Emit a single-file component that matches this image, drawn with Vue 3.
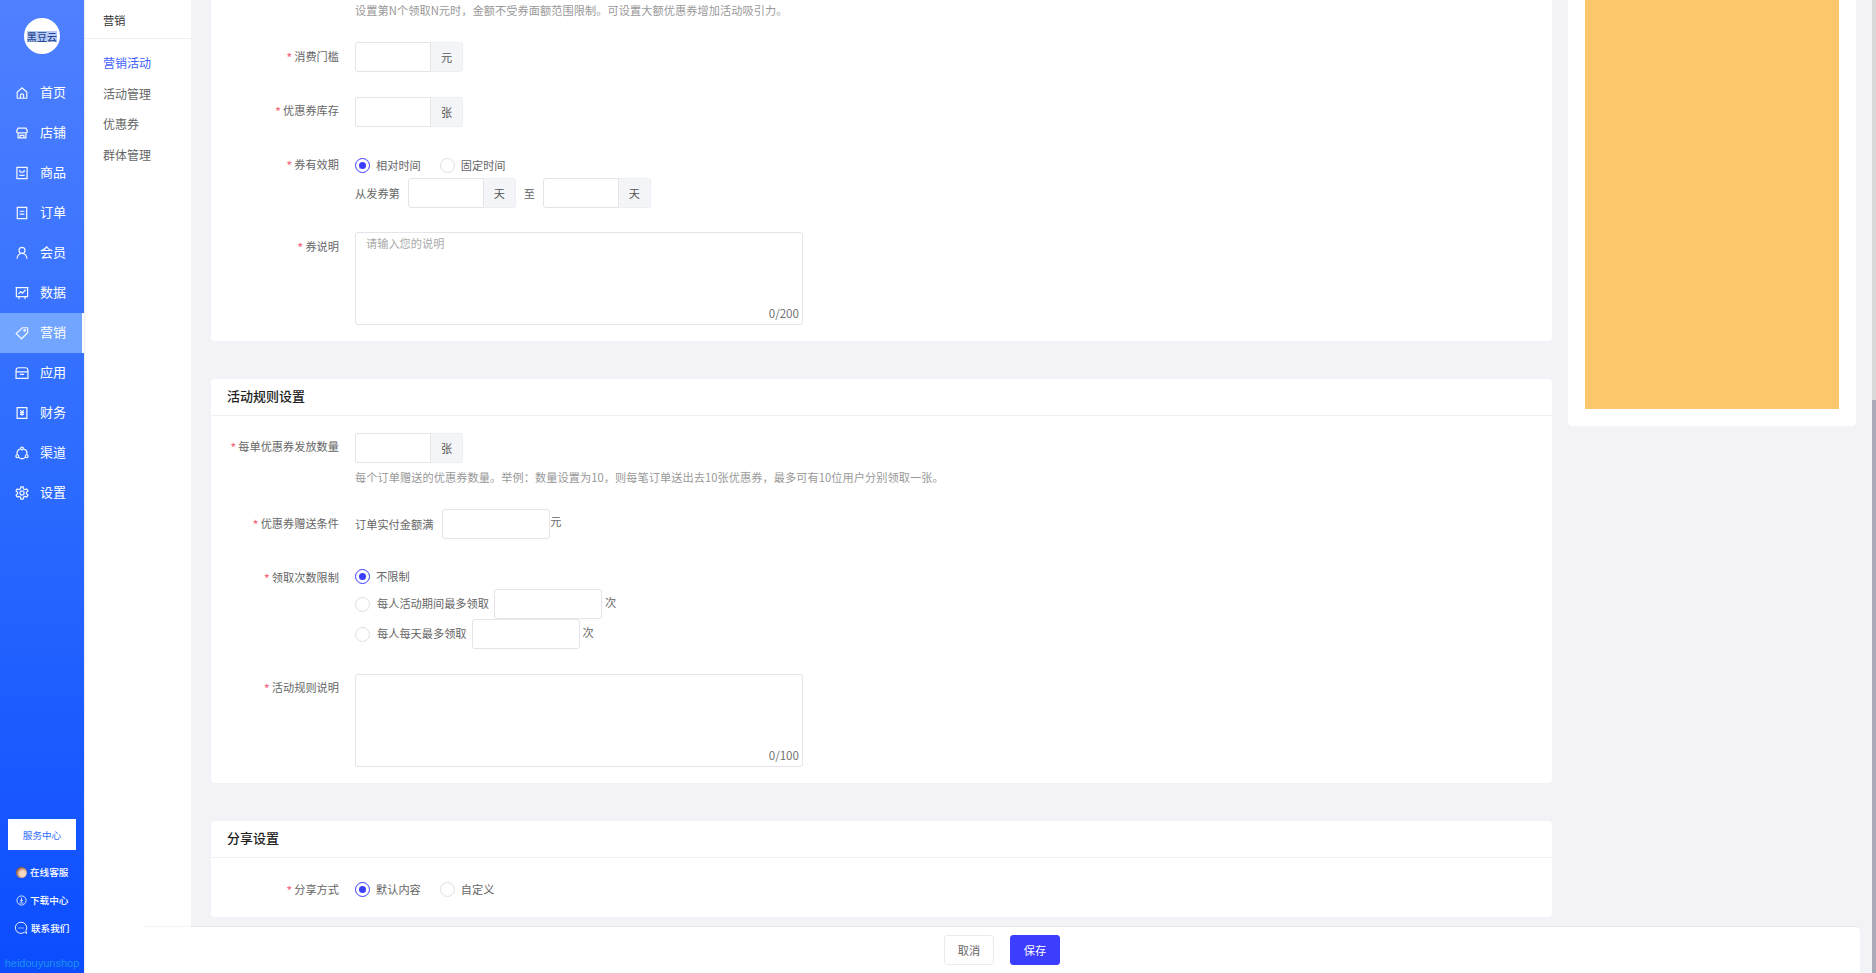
<template>
  <div class="page">
    <aside class="sidebar">
      <div class="logo"><span>黑豆云</span></div>
      <nav class="nav">
        <a v-for="item in navItems" :key="item.name" class="nav-item" :class="{ active: item.active }">
          <svg class="nav-icon" viewBox="0 0 16 16"><path :d="item.icon" /></svg>
          <span class="nav-text">{{ item.name }}</span>
        </a>
      </nav>
      <div class="side-bottom">
        <button class="service-btn">服务中心</button>
        <a class="side-link">
          <span class="avatar"></span>
          在线客服
        </a>
        <a class="side-link">
          <svg class="link-icon small" viewBox="0 0 12 12">
            <circle cx="6" cy="6" r="5" />
            <path d="M6 3v4M4.4 5.6 6 7.2l1.6-1.6M3.8 8.7h4.4" />
          </svg>
          下载中心
        </a>
        <a class="side-link contact">
          <svg class="link-icon" viewBox="0 0 14 14">
            <path d="M7 1.2a5.6 5.6 0 1 0 3.4 10l2.4 1.2-.9-2.6A5.6 5.6 0 0 0 7 1.2z" />
            <path d="M4.4 7h5.2" stroke-dasharray="1.2 .8" />
          </svg>
          联系我们
        </a>
        <div class="brand">heidouyunshop</div>
      </div>
    </aside>

    <aside class="subnav">
      <div class="subnav-title">营销</div>
      <ul class="subnav-list">
        <li class="on">营销活动</li>
        <li>活动管理</li>
        <li>优惠券</li>
        <li>群体管理</li>
      </ul>
    </aside>

    <main class="main">
      <div class="cards">
        <section class="card first">
          <div class="card-body">
            <p class="help top-help">设置第N个领取N元时，金额不受券面额范围限制。可设置大额优惠券增加活动吸引力。</p>
            <div class="form-row tight">
              <label class="label">消费门槛</label>
              <div class="group">
                <input class="input" />
                <span class="addon">元</span>
              </div>
            </div>
            <div class="form-row loose">
              <label class="label short">优惠券库存</label>
              <div class="group">
                <input class="input" />
                <span class="addon">张</span>
              </div>
            </div>
            <div class="form-row">
              <label class="label short">券有效期</label>
              <div class="control">
                <div class="radio-line validity">
                  <span class="radio checked"></span><span class="radio-text">相对时间</span>
                  <span class="radio second"></span><span class="radio-text">固定时间</span>
                </div>
                <div class="days-line">
                  <span class="plain">从发券第</span>
                  <div class="group">
                    <input class="input" />
                    <span class="addon">天</span>
                  </div>
                  <span class="plain to">至</span>
                  <div class="group">
                    <input class="input" />
                    <span class="addon">天</span>
                  </div>
                </div>
              </div>
            </div>
            <div class="form-row">
              <label class="label">券说明</label>
              <div class="textarea">
                <span class="placeholder">请输入您的说明</span>
                <span class="count">0/200</span>
              </div>
            </div>
          </div>
        </section>

        <section class="card">
          <h3 class="card-title">活动规则设置</h3>
          <div class="card-body with-title">
            <div class="form-row">
              <label class="label short">每单优惠券发放数量</label>
              <div class="control">
                <div class="group">
                  <input class="input" />
                  <span class="addon">张</span>
                </div>
                <p class="help rule-help">每个订单赠送的优惠券数量。举例：数量设置为10，则每笔订单送出去10张优惠券，最多可有10位用户分别领取一张。</p>
              </div>
            </div>
            <div class="form-row">
              <label class="label">优惠券赠送条件</label>
              <div class="inline-line">
                <span class="plain">订单实付金额满</span>
                <input class="input wide" />
                <span class="plain unit">元</span>
              </div>
            </div>
            <div class="form-row">
              <label class="label">领取次数限制</label>
              <div class="control">
                <div class="radio-line limit">
                  <span class="radio checked"></span><span class="radio-text">不限制</span>
                </div>
                <div class="inline-line">
                  <span class="radio"></span><span class="radio-text limit-text">每人活动期间最多领取</span>
                  <input class="input wide" />
                  <span class="plain unit times">次</span>
                </div>
                <div class="inline-line">
                  <span class="radio"></span><span class="radio-text limit-text">每人每天最多领取</span>
                  <input class="input wide" />
                  <span class="plain unit times">次</span>
                </div>
              </div>
            </div>
            <div class="form-row loose">
              <label class="label rule-label">活动规则说明</label>
              <div class="textarea">
                <span class="count">0/100</span>
              </div>
            </div>
          </div>
        </section>

        <section class="card">
          <h3 class="card-title">分享设置</h3>
          <div class="card-body share">
            <div class="form-row">
              <label class="label center">分享方式</label>
              <div class="radio-line share-line">
                <span class="radio checked"></span><span class="radio-text">默认内容</span>
                <span class="radio second"></span><span class="radio-text">自定义</span>
              </div>
            </div>
          </div>
        </section>
      </div>

      <aside class="preview">
        <div class="preview-image"></div>
      </aside>

      <div class="scrollbar"><div class="thumb"></div></div>
    </main>

    <footer class="footer">
      <button class="btn">取消</button>
      <button class="btn primary">保存</button>
    </footer>
  </div>
</template>

<script setup>
const navItems = [
  { name: "首页", icon: "M2.5 7 8 2.2 13.5 7v6.3a.7.7 0 0 1-.7.7H3.2a.7.7 0 0 1-.7-.7zM6.2 14v-3.2a1.8 1.8 0 0 1 3.6 0V14" },
  { name: "店铺", icon: "M3.5 2.5h9l1.7 3.5c0 1.2-1 1.8-2 1.8H3.8c-1 0-2-.6-2-1.8zM3.5 7.8v5.7h9V7.8M5.8 14v-3.4h4.4V14" },
  { name: "商品", icon: "M2.2 1.6h11.6v12.8H2.2zM5.5 4.5v1.6c0 .6.4 1 1 1h3c.6 0 1-.4 1-1V4.5M5 10.8h6" },
  { name: "订单", icon: "M2.6 1.6h10.8v12.8H2.6zM5.3 6h5.4M5.3 9.2h5.4" },
  { name: "会员", icon: "M8 1.6a3.4 3.4 0 1 0 0 6.8 3.4 3.4 0 0 0 0-6.8zM2.4 14.6c0-3.4 2.4-6.2 5.6-6.2s5.6 2.8 5.6 6.2" },
  { name: "数据", icon: "M1.6 2v10.2h12.8V2M.6 1.8h14.8M4 9.2l2.5-2.7 2 1.6 3.6-3.8M5 12.2 4.2 15M11 12.2l.8 2.8" },
  { name: "营销", active: true, icon: "M14.4 2v5.6L7.5 14.6 1.4 8.5 8.4 2h6zM11 4.2a.9.9 0 1 0 0 1.8.9.9 0 0 0 0-1.8z" },
  { name: "应用", icon: "M1.2 5.2C1.2 3.4 2.4 2 4 2h8c1.6 0 2.8 1.4 2.8 3.2V14.2H1.2zM1.2 6.8h13.6M5.6 9.6h4.8" },
  { name: "财务", icon: "M2.4 1.8h11.2v12.4H2.4zM6 4.8 8 7.2l2-2.4M5.6 7.6h4.8M5.6 9.6h4.8M8 7.2v4" },
  { name: "渠道", icon: "M5.6 3.4a5.5 5.5 0 0 0-3 6.4M10.4 3.4a5.5 5.5 0 0 1 3 6.4M4.4 13a5.5 5.5 0 0 0 7.2 0M8 1.2a1.6 1.6 0 1 0 0 3.2 1.6 1.6 0 0 0 0-3.2zM2.6 10a1.6 1.6 0 1 0 0 3.2 1.6 1.6 0 0 0 0-3.2zM13.4 10a1.6 1.6 0 1 0 0 3.2 1.6 1.6 0 0 0 0-3.2z" },
  { name: "设置", icon: "M6.7 1h2.6l.4 2.2 1.7 1 2.1-.8 1.3 2.3-1.7 1.5v1.6l1.7 1.5-1.3 2.3-2.1-.8-1.7 1-.4 2.2H6.7l-.4-2.2-1.7-1-2.1.8-1.3-2.3 1.7-1.5V7.2L1.2 5.7l1.3-2.3 2.1.8 1.7-1zM8 5.6a2.4 2.4 0 1 0 0 4.8 2.4 2.4 0 0 0 0-4.8z" },
];
</script>

<style>
html,
body {
  margin: 0;
  overflow: hidden;
}
</style>

<style scoped>
.page {
  display: flex;
  position: relative;
  height: 973px;
  overflow: hidden;
  background: #f2f2f7;
  font-family: "Noto Sans CJK SC", "Noto Sans", sans-serif;
  font-size: 11.2px;
  color: #666;
}

.sidebar {
  display: flex;
  flex-direction: column;
  flex: none;
  width: 84px;
  background: linear-gradient(180deg, #4f80ff 0%, #2f6dff 45%, #0b4dff 100%);
  color: #fff;
}

.logo {
  display: flex;
  align-items: center;
  justify-content: center;
  width: 36px;
  height: 36px;
  margin: 18px auto 19px;
  border-radius: 50%;
  background: #fff;
  font-size: 10px;
  font-weight: 500;
  letter-spacing: 0.2px;
  color: #24468f;
}

.logo span {
  background: #b5caf6;
  line-height: 11px;
}

.nav-item {
  display: flex;
  align-items: center;
  height: 40px;
  padding-left: 15px;
  font-size: 13px;
  color: #fff;
}

.nav-item.active {
  background: #72a5ff;
  border-right: 2px solid #fff;
}

.nav-icon {
  flex: none;
  width: 14px;
  height: 14px;
  margin-right: 11px;
  fill: none;
  stroke: #f2f6ff;
  stroke-width: 1.4;
}

.nav-text {
  margin-top: -3px;
}

.side-bottom {
  margin-top: auto;
  padding-bottom: 2px;
}

.service-btn {
  display: block;
  width: 68px;
  height: 31px;
  margin: 0 8px 8px;
  padding: 0;
  border: 0;
  background: #fff;
  font: inherit;
  font-size: 9.6px;
  color: #2f6dff;
}

.side-link {
  display: flex;
  align-items: center;
  height: 28px;
  padding-left: 16px;
  font-size: 9.6px;
  font-weight: 500;
  color: #fff;
}

.side-link.contact {
  padding-left: 14px;
}

.avatar {
  flex: none;
  width: 11px;
  height: 11px;
  margin-right: 3px;
  border-radius: 50%;
  background: radial-gradient(circle at 60% 60%, #f6d9c2 30%, #8a4a2c 75%);
}

.link-icon {
  flex: none;
  width: 14px;
  height: 14px;
  margin-right: 3px;
  fill: none;
  stroke: #e4ecff;
  stroke-width: 1;
}

.link-icon.small {
  width: 11px;
  height: 11px;
}

.brand {
  margin-top: 13px;
  text-align: center;
  font-family: "Liberation Sans", sans-serif;
  font-size: 11px;
  line-height: 16px;
  color: #1a92ec;
}

.subnav {
  flex: none;
  width: 106px;
  border-left: 1px solid #ececf0;
  background: #fff;
}

.subnav-title {
  height: 39px;
  padding-left: 18px;
  border-bottom: 1px solid #eeeef2;
  box-sizing: border-box;
  line-height: 40px;
  color: #333;
}

.subnav-list {
  margin: 9px 0 0;
  padding: 0;
  list-style: none;
}

.subnav-list li {
  height: 30.5px;
  padding-left: 18px;
  line-height: 30px;
  font-size: 12px;
  color: #666;
}

.subnav-list li.on {
  color: #3d5eff;
}

.main {
  display: flex;
  flex: 1;
  position: relative;
  gap: 16px;
  min-width: 0;
  padding: 0 20px;
  align-items: flex-start;
}

.cards {
  display: flex;
  flex: none;
  flex-direction: column;
  gap: 38px;
  width: 1341px;
}

.card {
  border-radius: 4px;
  background: #fff;
}

.card.first {
  border-radius: 0 0 4px 4px;
}

.card-title {
  height: 37px;
  margin: 0;
  padding-left: 16px;
  box-sizing: border-box;
  border-bottom: 1px solid #efeff3;
  line-height: 33px;
  font-size: 13px;
  font-weight: 500;
  color: #222;
}

.card-body {
  padding-bottom: 16px;
}

.card-body.with-title {
  padding-top: 17px;
}

.card-body.share {
  padding-top: 19px;
}

.top-help {
  margin: 0 0 0 144px;
  line-height: 20px;
}

.form-row {
  display: flex;
  align-items: flex-start;
  margin-top: 24px;
}

.card-body.with-title .form-row:first-child,
.card-body.share .form-row:first-child {
  margin-top: 0;
}

.form-row.tight {
  margin-top: 22px;
}

.form-row.loose {
  margin-top: 25px;
}

.label {
  flex: none;
  width: 128px;
  margin-right: 16px;
  text-align: right;
  line-height: 28px;
}

.label.short {
  line-height: 26px;
}

.label.rule-label {
  line-height: 27px;
}

.label.center {
  line-height: 24px;
}

.label::before {
  content: "*";
  margin-right: 2px;
  font-size: 13px;
  line-height: 1;
  vertical-align: -2px;
  color: #f5687c;
}

.group {
  display: inline-flex;
  height: 30px;
}

.input {
  display: block;
  width: 76px;
  height: 30px;
  padding: 0;
  border: 1px solid #e4e4e9;
  border-radius: 3px 0 0 3px;
  box-sizing: border-box;
  background: #fff;
  outline: none;
}

.input.wide {
  width: 108px;
  border-radius: 3px;
}

.addon {
  width: 32px;
  height: 30px;
  border: 1px solid #eeeff3;
  border-left: 0;
  border-radius: 0 3px 3px 0;
  box-sizing: border-box;
  background: #f4f5f8;
  text-align: center;
  line-height: 29px;
  color: #555;
}

.control {
  display: flex;
  flex-direction: column;
}

.help {
  letter-spacing: 0.06px;
  color: #999;
}

.rule-help {
  margin: 6px 0 0;
  line-height: 16px;
  white-space: nowrap;
}

.radio-line,
.inline-line,
.days-line {
  display: flex;
  align-items: center;
}

.radio-line {
  height: 27px;
}

.radio-line.limit {
  height: 26px;
}

.radio-line.share-line {
  height: 24px;
}

.radio-line.validity .radio {
  margin-top: 2px;
}

.inline-line {
  height: 30px;
}

.radio {
  flex: none;
  position: relative;
  width: 15px;
  height: 15px;
  margin-right: 6px;
  border: 1px solid #dfdfe4;
  border-radius: 50%;
  box-sizing: border-box;
  background: #fff;
}

.radio.second {
  margin-left: 19px;
}

.radio.checked {
  border-color: #3b3dff;
}

.radio.checked::after {
  content: "";
  position: absolute;
  top: 3px;
  left: 3px;
  width: 7px;
  height: 7px;
  border-radius: 50%;
  background: #3b3dff;
}

.limit-text {
  margin: -2px 5px 0 1px;
}

.radio-text,
.plain {
  color: #666;
}

.days-line .plain {
  margin-right: 8px;
}

.days-line .plain.to {
  margin: 0 8px;
}

.inline-line .plain:first-child {
  margin-right: 9px;
}

.unit {
  align-self: flex-start;
  line-height: 24px;
}

.unit.times {
  margin-left: 3px;
  line-height: 26px;
}

.textarea {
  position: relative;
  width: 448px;
  height: 93px;
  border: 1px solid #e4e4e9;
  border-radius: 3px;
  box-sizing: border-box;
}

.placeholder {
  position: absolute;
  top: 1px;
  left: 10px;
  line-height: 18px;
  color: #aaa;
}

.count {
  position: absolute;
  right: 3px;
  bottom: 2px;
  font-size: 11.6px;
  line-height: 18px;
  color: #707070;
}

.preview {
  flex: none;
  width: 288px;
  height: 426px;
  padding: 0 17px 17px;
  box-sizing: border-box;
  border-radius: 0 0 4px 4px;
  background: #fff;
}

.preview-image {
  height: 100%;
  background: #fdc76c;
}

.scrollbar {
  position: absolute;
  top: 0;
  right: 0;
  bottom: 0;
  width: 4px;
  background: #d9d9d9;
}

.thumb {
  position: absolute;
  top: 400px;
  bottom: 0;
  width: 100%;
  background: #aaaab8;
}

.footer {
  display: flex;
  position: absolute;
  left: 144px;
  bottom: 0;
  width: 1716px;
  height: 46px;
  gap: 16px;
  align-items: center;
  justify-content: center;
  border-radius: 4px 4px 0 0;
  background: #fff;
  box-shadow: 0 -1px 1px rgba(0, 0, 0, 0.05);
}

.btn {
  width: 50px;
  height: 30px;
  padding: 0;
  border: 1px solid #ebebef;
  border-radius: 3px;
  background: #fff;
  font: inherit;
  font-size: 11.2px;
  color: #666;
}

.btn.primary {
  border-color: #3b3dff;
  background: #3b3dff;
  color: #fff;
}
</style>
